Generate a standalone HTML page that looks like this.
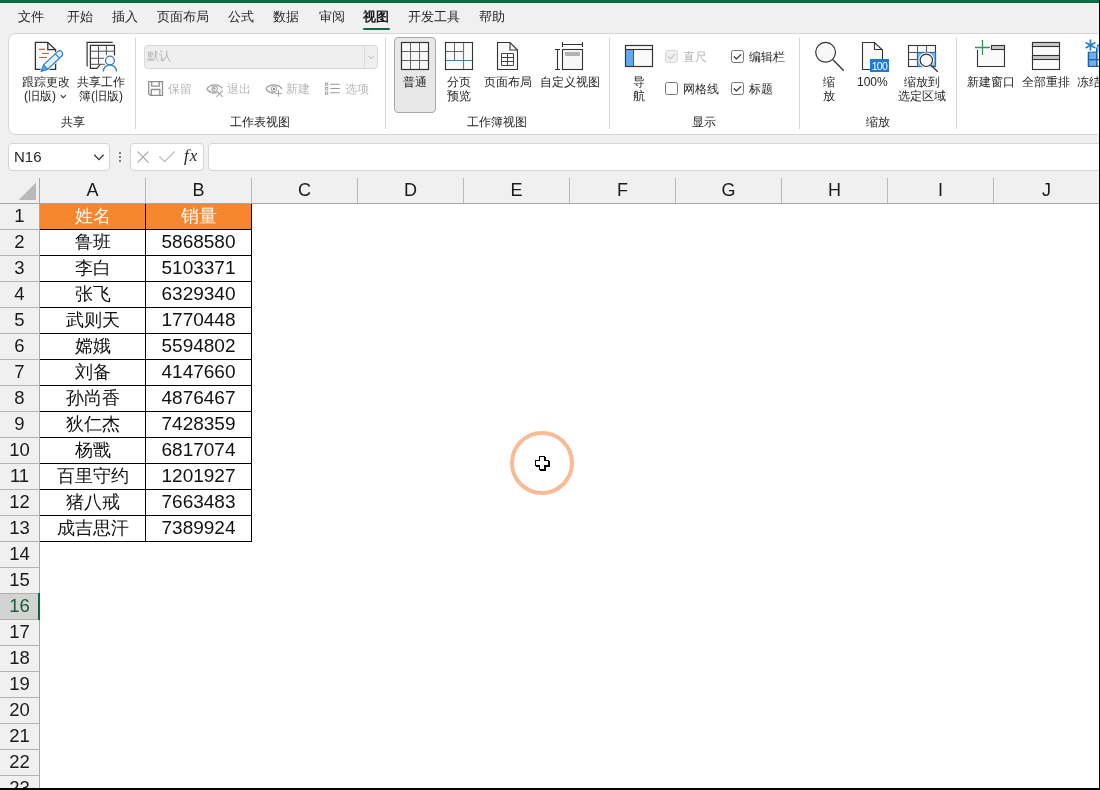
<!DOCTYPE html>
<html><head><meta charset="utf-8">
<style>
*{margin:0;padding:0;box-sizing:border-box}
html,body{width:1100px;height:790px;overflow:hidden;background:#f0f0f0;font-family:"Liberation Sans",sans-serif;color:#262626}
.a{position:absolute;white-space:nowrap}
.tab{position:absolute;top:7px;font-size:13px;line-height:20px;color:#262626;white-space:nowrap}
.rl{position:absolute;font-size:12px;line-height:14px;color:#262626;text-align:center;white-space:nowrap}
.gl{position:absolute;top:114px;font-size:12px;line-height:16px;color:#262626;white-space:nowrap}
.sep{position:absolute;top:38px;width:1px;height:91px;background:#d4d4d4}
.dis{color:#a6a6a6}
.ch{position:absolute;top:178px;height:25px;width:105px;text-align:center;font-size:18px;line-height:25px;color:#1a1a1a}
.cs{position:absolute;top:178px;width:1px;height:25px;background:#bababa}
.rh{position:absolute;left:0;width:39px;height:25px;text-align:center;font-size:18.5px;line-height:24px;color:#1a1a1a}
.rhl{position:absolute;left:0;width:39px;height:1px;background:#b2b2b2}
.sel{background:#d3d3d3;color:#1b5e38}
.tx{position:absolute;width:105px;height:26px;text-align:center;line-height:26px;color:#111;white-space:nowrap}
.cn{font-size:19px}
.cc{font-size:17.5px}
.hd{color:#fff}
.gs{position:absolute;left:0;top:0;width:1100px;height:790px;overflow:hidden;will-change:transform}
</style></head><body><div class="gs">
<div class="a" style="left:0;top:0;width:1100px;height:2px;background:#0e6e46"></div><div class="a" style="left:0;top:2px;width:1100px;height:1px;background:#125e40"></div><div class="a" style="left:0;top:3px;width:1100px;height:1px;background:#e1fbee"></div><div class="a" style="left:0;top:4px;width:1100px;height:1px;background:#eaeeee"></div>

<div class="tab" style="left:18px">文件</div>
<div class="tab" style="left:67px">开始</div>
<div class="tab" style="left:112px">插入</div>
<div class="tab" style="left:157px">页面布局</div>
<div class="tab" style="left:228px">公式</div>
<div class="tab" style="left:273px">数据</div>
<div class="tab" style="left:319px">审阅</div>
<div class="tab" style="left:363px;font-weight:bold;color:#1a1a1a">视图</div>
<div class="tab" style="left:408px">开发工具</div>
<div class="tab" style="left:479px">帮助</div>
<div class="a" style="left:363px;top:28px;width:27px;height:2px;background:#0e6b3e;border-radius:1px"></div>

<div class="a" style="left:8px;top:33px;width:1110px;height:102px;background:#fff;border:1px solid #d6d6d6;border-radius:8px"></div>
<div class="sep" style="left:135px"></div>
<div class="sep" style="left:385px"></div>
<div class="sep" style="left:609px"></div>
<div class="sep" style="left:799px"></div>
<div class="sep" style="left:956px"></div>
<div class="gl" style="left:61px">共享</div>
<div class="gl" style="left:230px">工作表视图</div>
<div class="gl" style="left:467px">工作簿视图</div>
<div class="gl" style="left:692px">显示</div>
<div class="gl" style="left:866px">缩放</div>
<!-- 共享 group -->
<svg class="a" style="left:25px;top:36px" width="50" height="40" viewBox="0 0 50 40">
<path d="M10.4,6.3H22.8L30.6,13.7V33.4H10.4Z" fill="#fafafa" stroke="#333" stroke-width="1.3" stroke-linejoin="miter"/>
<path d="M22.8,6.3V13.7H30.6" fill="none" stroke="#333" stroke-width="1.3"/>
<path d="M14,13.4H20M17,17.5H24M14,21.5H22" stroke="#b5683a" stroke-width="1.2"/>
<g transform="translate(16.4,35.2) rotate(-43.5)">
<path d="M0,0L6,-3H25.2A3,3 0 0 1 25.2,3H6Z" fill="#e3f2fd" stroke="#fff" stroke-width="2.6"/>
<path d="M0,0L6,-3H25.2A3,3 0 0 1 25.2,3H6Z" fill="#e3f2fd" stroke="#2b82d4" stroke-width="1.2"/>
<path d="M0,0L6,-3V3Z" fill="#55a6ea" stroke="#2b82d4" stroke-width="1"/>
<path d="M22,-3V3" stroke="#2b82d4" stroke-width="1.1"/>
</g>
</svg>
<svg class="a" style="left:75px;top:36px" width="50" height="40" viewBox="0 0 50 40">
<path d="M12.1,30.4V6.3H37.7" fill="none" stroke="#333" stroke-width="1.2"/>
<path d="M25.3,28.3L22,32.4H15.4V9.4H39.5V19.5" fill="#fafafa" stroke="#333" stroke-width="1.2"/>
<path d="M15.4,15.2H39.5M15.4,22.3H29M15.4,28.3H30M23.5,9.4V28.3M31.4,9.4V19.5" fill="none" stroke="#555" stroke-width="1"/>
<circle cx="34.9" cy="24.5" r="6.2" fill="#fff"/>
<path d="M27,36.5A8,8 0 0 1 42.8,36.5" fill="#fafafa" stroke="#fff" stroke-width="3"/>
<circle cx="34.9" cy="24.5" r="4.4" fill="#fafafa" stroke="#2f7fc8" stroke-width="1.3"/>
<path d="M28.3,35.5A6.6,6.6 0 0 1 41.5,35.5" fill="none" stroke="#2f7fc8" stroke-width="1.3"/>
</svg>
<div class="rl" style="left:21px;top:75px;width:50px">跟踪更改</div>
<div class="rl" style="left:24px;top:89px">(旧版)</div>
<svg class="a" style="left:59px;top:93px" width="9" height="7"><path d="M1.8,2.2L4.3,4.7L6.8,2.2" fill="none" stroke="#333" stroke-width="1.1"/></svg>
<div class="rl" style="left:76px;top:75px;width:50px">共享工作</div>
<div class="rl" style="left:76px;top:89px;width:50px">簿(旧版)</div>

<!-- 工作表视图 group -->
<div class="a" style="left:144px;top:45px;width:234px;height:24px;background:#efefef;border:1px solid #d8d8d8;border-radius:4px"></div>
<div class="a" style="left:364px;top:46px;width:1px;height:22px;background:#dcdcdc"></div>
<svg class="a" style="left:366px;top:53px" width="10" height="8"><path d="M2.5,2.8L5.3,5.6L8.1,2.8" fill="none" stroke="#b0b0b0" stroke-width="1"/></svg>
<div class="rl dis" style="left:147px;top:49px;color:#b4b4b4">默认</div>
<svg class="a" style="left:146px;top:79px" width="20" height="20" viewBox="0 0 20 20">
<path d="M2.7,2.7H16.5V16.4H4.3L2.7,14.8Z" fill="none" stroke="#8e8e8e" stroke-width="1.3"/>
<path d="M5.7,2.7V7.2H13.2V2.7M5.3,16.4V10.5H13.8V16.4" fill="none" stroke="#8e8e8e" stroke-width="1.3"/>
</svg>
<div class="rl dis" style="left:168px;top:82px;color:#b8b8b8">保留</div>
<svg class="a" style="left:205px;top:82px" width="20" height="17" viewBox="0 0 20 17">
<path d="M1.9,6.9C5,1.8 13.5,1.4 17.3,6.4M1.9,6.9C4.5,10.6 9,11.4 12.2,10.6" fill="none" stroke="#a0a0a0" stroke-width="1.3"/>
<circle cx="9.7" cy="6.7" r="2.7" fill="none" stroke="#a6a6a6" stroke-width="1.1"/>
<circle cx="9.4" cy="6.4" r="1.1" fill="#8a8a8a"/>
<path d="M11.3,8.5L17.8,14.8M17.8,8.5L11.3,14.8" stroke="#fff" stroke-width="2.4"/>
<path d="M11.3,8.5L17.8,14.8M17.8,8.5L11.3,14.8" stroke="#a8a8a8" stroke-width="1.1"/>
</svg>
<div class="rl dis" style="left:227px;top:82px;color:#b8b8b8">退出</div>
<svg class="a" style="left:264px;top:82px" width="20" height="17" viewBox="0 0 20 17">
<path d="M1.9,6.9C5,1.8 14,1.4 17.9,6.8M1.9,6.9C4.5,10.6 9,11.4 12.2,10.6" fill="none" stroke="#a0a0a0" stroke-width="1.3"/>
<circle cx="10" cy="6.9" r="2.7" fill="none" stroke="#b0b0b0" stroke-width="1.1"/>
<circle cx="10" cy="6.9" r="1.2" fill="#8a8a8a"/>
<path d="M10.6,11.5H18.5M14.5,7.6V15.3" stroke="#fff" stroke-width="2.6"/>
<path d="M11.1,11.5H17.9M14.5,8.1V14.8" stroke="#a4a4a4" stroke-width="1.1"/>
</svg>
<div class="rl dis" style="left:286px;top:82px;color:#b8b8b8">新建</div>
<svg class="a" style="left:323px;top:81px" width="20" height="16" viewBox="0 0 20 16">
<rect x="2.5" y="2" width="2.3" height="2.3" fill="none" stroke="#9a9a9a" stroke-width="0.9"/>
<rect x="2.5" y="6.5" width="2.3" height="2.3" fill="none" stroke="#9a9a9a" stroke-width="0.9"/>
<rect x="2.5" y="11" width="2.3" height="2.3" fill="none" stroke="#9a9a9a" stroke-width="0.9"/>
<path d="M7.3,3.2H16.8M7.3,7.5H16.8M7.3,11.8H16.8" stroke="#9a9a9a" stroke-width="1.1"/>
</svg>
<div class="rl dis" style="left:345px;top:82px;color:#b8b8b8">选项</div>

<!-- 工作簿视图 group -->
<div class="a" style="left:394px;top:37px;width:42px;height:76px;background:#e8e8e8;border:1px solid #a9a9a9;border-radius:4px"></div>
<svg class="a" style="left:398px;top:39px" width="34" height="34" viewBox="0 0 34 34">
<rect x="3.5" y="3.5" width="27" height="27" fill="#f7f7f7" stroke="#333" stroke-width="1.1"/>
<path d="M12.5,3.5V30.5M21.5,3.5V30.5M3.5,12.5H30.5M3.5,21.5H30.5" stroke="#666" stroke-width="1"/>
<rect x="3.5" y="3.5" width="27" height="27" fill="none" stroke="#333" stroke-width="1.1"/>
</svg>
<div class="rl" style="left:403px;top:75px">普通</div>
<svg class="a" style="left:442px;top:39px" width="34" height="34" viewBox="0 0 34 34">
<rect x="3.5" y="3.5" width="27" height="27" fill="#fafafa" stroke="#333" stroke-width="1.1"/>
<path d="M12.5,3.5V21.5M3.5,12.5H21.5" stroke="#666" stroke-width="1"/>
<path d="M21.5,4V30M4,21.5H30" stroke="#2a8ad0" stroke-width="1.1"/>
</svg>
<div class="rl" style="left:447px;top:75px">分页</div>
<div class="rl" style="left:447px;top:89px">预览</div>
<svg class="a" style="left:494px;top:39px" width="28" height="34" viewBox="0 0 28 34">
<path d="M3.5,3.5H16L23.5,11V30.5H3.5Z" fill="#fafafa" stroke="#333" stroke-width="1.1"/>
<path d="M16,3.5V11H23.5" fill="none" stroke="#333" stroke-width="1.1"/>
<path d="M7.5,14.5H19.5V26.5H7.5ZM13.5,14.5V26.5M7.5,18.5H19.5M7.5,22.5H19.5" fill="none" stroke="#444" stroke-width="1"/>
</svg>
<div class="rl" style="left:484px;top:75px">页面布局</div>
<svg class="a" style="left:552px;top:39px" width="34" height="34" viewBox="0 0 34 34">
<rect x="10.5" y="10.5" width="20" height="20" fill="#f7f7f7" stroke="#333" stroke-width="1.1"/>
<rect x="13.5" y="13.5" width="14" height="3" fill="#b4b4b4" stroke="#999" stroke-width="0.6"/>
<path d="M10.5,5.5H30.5M10.5,3V8M30.5,3V8M5.5,10.5V30.5M3,10.5H8M3,30.5H8" fill="none" stroke="#333" stroke-width="1.1"/>
</svg>
<div class="rl" style="left:540px;top:75px">自定义视图</div>

<!-- 显示 group -->
<svg class="a" style="left:622px;top:42px" width="34" height="28" viewBox="0 0 34 28">
<rect x="3.5" y="3.5" width="27" height="21" fill="#fafafa" stroke="#333" stroke-width="1.1"/>
<rect x="3.5" y="7.5" width="8" height="17" fill="#62a8ec" stroke="#1d5e9e" stroke-width="1"/>
<path d="M3.5,7.5H30.5" stroke="#333" stroke-width="1.1"/>
<rect x="3.5" y="3.5" width="27" height="21" fill="none" stroke="#333" stroke-width="1.1"/>
</svg>
<div class="rl" style="left:633px;top:75px">导</div>
<div class="rl" style="left:633px;top:89px">航</div>
<div class="a" style="left:665px;top:50px;width:13px;height:13px;background:#f0f0f0;border:1px solid #d6d6d6;border-radius:2.5px"></div>
<svg class="a" style="left:665px;top:50px" width="13" height="13"><path d="M3,6.4L5.4,8.8L10,4.2" fill="none" stroke="#c4c4c4" stroke-width="1.1"/></svg>
<div class="rl" style="left:683px;top:50px;color:#b4b4b4">直尺</div>
<div class="a" style="left:665px;top:82px;width:13px;height:13px;background:#fff;border:1px solid #767676;border-radius:2.5px"></div>
<div class="rl" style="left:683px;top:82px">网格线</div>
<div class="a" style="left:731px;top:50px;width:13px;height:13px;background:#fff;border:1px solid #767676;border-radius:2.5px"></div>
<svg class="a" style="left:731px;top:50px" width="13" height="13"><path d="M2.9,6.4L5.3,8.9L10.2,4.3" fill="none" stroke="#262626" stroke-width="1.1"/></svg>
<div class="rl" style="left:749px;top:50px">编辑栏</div>
<div class="a" style="left:731px;top:82px;width:13px;height:13px;background:#fff;border:1px solid #767676;border-radius:2.5px"></div>
<svg class="a" style="left:731px;top:82px" width="13" height="13"><path d="M2.9,6.4L5.3,8.9L10.2,4.3" fill="none" stroke="#262626" stroke-width="1.1"/></svg>
<div class="rl" style="left:749px;top:82px">标题</div>

<!-- 缩放 group -->
<svg class="a" style="left:810px;top:38px" width="40" height="36" viewBox="0 0 40 36">
<circle cx="15.6" cy="14.3" r="9.9" fill="#f8f8f8" stroke="#333" stroke-width="1.2"/>
<path d="M23,21.8L33.8,32.8" stroke="#333" stroke-width="1.3"/>
</svg>
<div class="rl" style="left:823px;top:75px">缩</div>
<div class="rl" style="left:823px;top:89px">放</div>
<svg class="a" style="left:858px;top:38px" width="34" height="36" viewBox="0 0 34 36">
<path d="M4.5,4.5H16.5L24.5,12V31.5H4.5Z" fill="#fafafa" stroke="#333" stroke-width="1.1"/>
<path d="M16.5,4.5V11.5H24.5" fill="none" stroke="#333" stroke-width="1.1"/>
<rect x="12" y="21" width="19" height="13" fill="#1f7bd1"/>
<text x="21.5" y="31.6" font-family="Liberation Sans" font-size="10.5" fill="#fff" text-anchor="middle" letter-spacing="-0.6">100</text>
</svg>
<div class="rl" style="left:857px;top:75px">100%</div>
<svg class="a" style="left:904px;top:38px" width="40" height="36" viewBox="0 0 40 36">
<rect x="4.5" y="7.5" width="27" height="21" fill="#fafafa" stroke="#333" stroke-width="1.1"/>
<path d="M4.5,14.5H13.5M4.5,21.5H13.5M13.5,7.5V28.5M22.5,7.5V14.5" stroke="#555" stroke-width="1"/>
<rect x="13.5" y="14.5" width="18" height="14" fill="#7dbcf2" stroke="#1f6fc0" stroke-width="1.2"/>
<circle cx="22.3" cy="22.3" r="7.8" fill="#fff"/>
<circle cx="22.3" cy="22.3" r="6.2" fill="#f8f8f8" stroke="#333" stroke-width="1.2"/>
<path d="M26.8,27L33.7,33.7" stroke="#333" stroke-width="1.3"/>
</svg>
<div class="rl" style="left:904px;top:75px">缩放到</div>
<div class="rl" style="left:898px;top:89px">选定区域</div>

<!-- 窗口 group -->
<svg class="a" style="left:970px;top:36px" width="40" height="36" viewBox="0 0 40 36">
<path d="M7.5,14V30.5H34.5V9.5H21.5" fill="#fafafa" stroke="#333" stroke-width="1.1"/>
<rect x="21.5" y="9.5" width="13" height="4" fill="#c8c8c8" stroke="#333" stroke-width="1.1"/>
<path d="M5,11.5H20M12.5,4V19" stroke="#fff" stroke-width="3"/>
<path d="M5,11.5H20M12.5,4V19" stroke="#3f8c5c" stroke-width="1.3"/>
</svg>
<div class="rl" style="left:967px;top:75px">新建窗口</div>
<svg class="a" style="left:1028px;top:38px" width="36" height="34" viewBox="0 0 36 34">
<rect x="4.5" y="4.5" width="27" height="27" fill="#fafafa" stroke="#333" stroke-width="1.1"/>
<rect x="4.5" y="4.5" width="27" height="4" fill="#c8c8c8" stroke="#333" stroke-width="1.1"/>
<rect x="4.5" y="17.5" width="27" height="4" fill="#c8c8c8" stroke="#333" stroke-width="1.1"/>
</svg>
<div class="rl" style="left:1022px;top:75px">全部重排</div>
<svg class="a" style="left:1078px;top:38px" width="24" height="34" viewBox="0 0 24 34">
<path d="M10.5,14.2V28.4H24M10.5,21.6H24M18.7,7.5V28.4M18.7,7.5H24" fill="none" stroke="#1f5fa8" stroke-width="1.3"/>
<rect x="11" y="14.8" width="7.2" height="13" fill="#6aaef0"/>
<rect x="19.2" y="8" width="5" height="6" fill="#9cc9f3"/>
<path d="M10.5,14.2V28.4H18.7V14.2ZM10.5,21.6H18.7M18.7,7.5V28.4" fill="none" stroke="#1f5fa8" stroke-width="1.3"/>
<circle cx="12.5" cy="7.2" r="6.5" fill="#fff"/>
<path d="M12.5,1.6V12.8M7.6,4.4L17.4,10M17.4,4.4L7.6,10" stroke="#2a7fd0" stroke-width="1.7"/>
</svg>
<div class="rl" style="left:1077px;top:75px">冻结</div>


<div class="a" style="left:8px;top:143px;width:102px;height:28px;background:#fff;border:1px solid #d4d4d4;border-radius:4px"></div>
<div class="a" style="left:14px;top:149px;font-size:15px;line-height:16px;color:#262626">N16</div>
<svg class="a" style="left:92px;top:152px" width="14" height="10"><path d="M2.3,2.8L6.9,7.6L11.6,2.8" fill="none" stroke="#333" stroke-width="1.3"/></svg>
<div class="a" style="left:119px;top:152px;width:2px;height:2px;background:#7a7a7a"></div>
<div class="a" style="left:119px;top:156px;width:2px;height:2px;background:#7a7a7a"></div>
<div class="a" style="left:119px;top:160px;width:2px;height:2px;background:#7a7a7a"></div>
<div class="a" style="left:130px;top:143px;width:74px;height:28px;background:#fff;border:1px solid #d4d4d4;border-radius:4px"></div>
<svg class="a" style="left:131px;top:143px" width="72" height="27">
<path d="M6.5,8.5L17.5,19.5M17.5,8.5L6.5,19.5" stroke="#ababab" stroke-width="1.1"/>
<path d="M28.3,13.3L33.6,18.6L43.6,8.3" fill="none" stroke="#b4b4b4" stroke-width="1.1"/>
</svg>
<div class="a" style="left:184px;top:145px;font-family:'Liberation Serif',serif;font-style:italic;font-size:17px;line-height:22px;color:#262626;letter-spacing:1px">fx</div>
<div class="a" style="left:208px;top:143px;width:1000px;height:28px;background:#fff;border:1px solid #d4d4d4;border-radius:4px"></div>

<div class="a" style="left:40px;top:204px;width:1060px;height:586px;background:#fff"></div>
<svg class="a" style="left:0;top:178px" width="40" height="25"><path d="M36,4.4V22H18.6Z" fill="#b9b9b9"/></svg>
<div class="ch" style="left:40px">A</div>
<div class="ch" style="left:146px">B</div>
<div class="cs" style="left:145px"></div>
<div class="ch" style="left:252px">C</div>
<div class="cs" style="left:251px"></div>
<div class="ch" style="left:358px">D</div>
<div class="cs" style="left:357px"></div>
<div class="ch" style="left:464px">E</div>
<div class="cs" style="left:463px"></div>
<div class="ch" style="left:570px">F</div>
<div class="cs" style="left:569px"></div>
<div class="ch" style="left:676px">G</div>
<div class="cs" style="left:675px"></div>
<div class="ch" style="left:782px">H</div>
<div class="cs" style="left:781px"></div>
<div class="ch" style="left:888px">I</div>
<div class="cs" style="left:887px"></div>
<div class="ch" style="left:994px">J</div>
<div class="cs" style="left:993px"></div>
<div class="rh" style="top:204px">1</div>
<div class="rhl" style="top:229px"></div>
<div class="rh" style="top:230px">2</div>
<div class="rhl" style="top:255px"></div>
<div class="rh" style="top:256px">3</div>
<div class="rhl" style="top:281px"></div>
<div class="rh" style="top:282px">4</div>
<div class="rhl" style="top:307px"></div>
<div class="rh" style="top:308px">5</div>
<div class="rhl" style="top:333px"></div>
<div class="rh" style="top:334px">6</div>
<div class="rhl" style="top:359px"></div>
<div class="rh" style="top:360px">7</div>
<div class="rhl" style="top:385px"></div>
<div class="rh" style="top:386px">8</div>
<div class="rhl" style="top:411px"></div>
<div class="rh" style="top:412px">9</div>
<div class="rhl" style="top:437px"></div>
<div class="rh" style="top:438px">10</div>
<div class="rhl" style="top:463px"></div>
<div class="rh" style="top:464px">11</div>
<div class="rhl" style="top:489px"></div>
<div class="rh" style="top:490px">12</div>
<div class="rhl" style="top:515px"></div>
<div class="rh" style="top:516px">13</div>
<div class="rhl" style="top:541px"></div>
<div class="rh" style="top:542px">14</div>
<div class="rhl" style="top:567px"></div>
<div class="rh" style="top:568px">15</div>
<div class="rhl" style="top:593px"></div>
<div class="rh sel" style="top:594px">16</div>
<div class="rhl" style="top:619px"></div>
<div class="rh" style="top:620px">17</div>
<div class="rhl" style="top:645px"></div>
<div class="rh" style="top:646px">18</div>
<div class="rhl" style="top:671px"></div>
<div class="rh" style="top:672px">19</div>
<div class="rhl" style="top:697px"></div>
<div class="rh" style="top:698px">20</div>
<div class="rhl" style="top:723px"></div>
<div class="rh" style="top:724px">21</div>
<div class="rhl" style="top:749px"></div>
<div class="rh" style="top:750px">22</div>
<div class="rhl" style="top:775px"></div>
<div class="rh" style="top:776px">23</div>
<div class="rhl" style="top:801px"></div>
<div class="rhl" style="top:593px;background:#b0b0b0"></div><div class="rhl" style="top:619px;background:#b0b0b0"></div>
<div class="a" style="left:0;top:203px;width:1100px;height:1px;background:#a8a8a8"></div>
<div class="a" style="left:39px;top:178px;width:1px;height:612px;background:#a8a8a8"></div>
<div class="a" style="left:40px;top:204px;width:211px;height:25px;background:#f8862e"></div>
<div class="tx cc hd" style="left:40px;top:203px">姓名</div>
<div class="tx cc hd" style="left:146px;top:203px">销量</div>
<div class="tx cc" style="left:40px;top:229px">鲁班</div>
<div class="tx cn" style="left:146px;top:229px">5868580</div>
<div class="tx cc" style="left:40px;top:255px">李白</div>
<div class="tx cn" style="left:146px;top:255px">5103371</div>
<div class="tx cc" style="left:40px;top:281px">张飞</div>
<div class="tx cn" style="left:146px;top:281px">6329340</div>
<div class="tx cc" style="left:40px;top:307px">武则天</div>
<div class="tx cn" style="left:146px;top:307px">1770448</div>
<div class="tx cc" style="left:40px;top:333px">嫦娥</div>
<div class="tx cn" style="left:146px;top:333px">5594802</div>
<div class="tx cc" style="left:40px;top:359px">刘备</div>
<div class="tx cn" style="left:146px;top:359px">4147660</div>
<div class="tx cc" style="left:40px;top:385px">孙尚香</div>
<div class="tx cn" style="left:146px;top:385px">4876467</div>
<div class="tx cc" style="left:40px;top:411px">狄仁杰</div>
<div class="tx cn" style="left:146px;top:411px">7428359</div>
<div class="tx cc" style="left:40px;top:437px">杨戬</div>
<div class="tx cn" style="left:146px;top:437px">6817074</div>
<div class="tx cc" style="left:40px;top:463px">百里守约</div>
<div class="tx cn" style="left:146px;top:463px">1201927</div>
<div class="tx cc" style="left:40px;top:489px">猪八戒</div>
<div class="tx cn" style="left:146px;top:489px">7663483</div>
<div class="tx cc" style="left:40px;top:515px">成吉思汗</div>
<div class="tx cn" style="left:146px;top:515px">7389924</div>
<div class="a" style="left:38px;top:593px;width:2px;height:27px;background:#0e6b3e"></div>
<div class="a" style="left:510px;top:430.5px;width:64px;height:64px;border:4.6px solid #f9bb95;border-radius:50%"></div><svg class="a" style="left:530px;top:450px" width="26" height="26" shape-rendering="crispEdges"><path d="M10,7H16V21H10ZM6,11H20V17H6Z" fill="#000"/><path d="M9,6H15V20H9ZM5,10H19V16H5Z" fill="#000"/><path d="M10,7H14V19H10ZM6,11H18V15H6Z" fill="#fff"/></svg>
<div class="a" style="left:40px;top:229px;width:212px;height:1px;background:#000"></div>
<div class="a" style="left:40px;top:255px;width:212px;height:1px;background:#000"></div>
<div class="a" style="left:40px;top:281px;width:212px;height:1px;background:#000"></div>
<div class="a" style="left:40px;top:307px;width:212px;height:1px;background:#000"></div>
<div class="a" style="left:40px;top:333px;width:212px;height:1px;background:#000"></div>
<div class="a" style="left:40px;top:359px;width:212px;height:1px;background:#000"></div>
<div class="a" style="left:40px;top:385px;width:212px;height:1px;background:#000"></div>
<div class="a" style="left:40px;top:411px;width:212px;height:1px;background:#000"></div>
<div class="a" style="left:40px;top:437px;width:212px;height:1px;background:#000"></div>
<div class="a" style="left:40px;top:463px;width:212px;height:1px;background:#000"></div>
<div class="a" style="left:40px;top:489px;width:212px;height:1px;background:#000"></div>
<div class="a" style="left:40px;top:515px;width:212px;height:1px;background:#000"></div>
<div class="a" style="left:40px;top:541px;width:212px;height:1px;background:#000"></div>
<div class="a" style="left:145px;top:204px;width:1px;height:338px;background:#000"></div>
<div class="a" style="left:251px;top:204px;width:1px;height:338px;background:#000"></div>

<div class="a" style="left:1099px;top:0;width:1px;height:790px;background:#000"></div>
<div class="a" style="left:0;top:788px;width:1100px;height:2px;background:#000"></div>
</div></body></html>
